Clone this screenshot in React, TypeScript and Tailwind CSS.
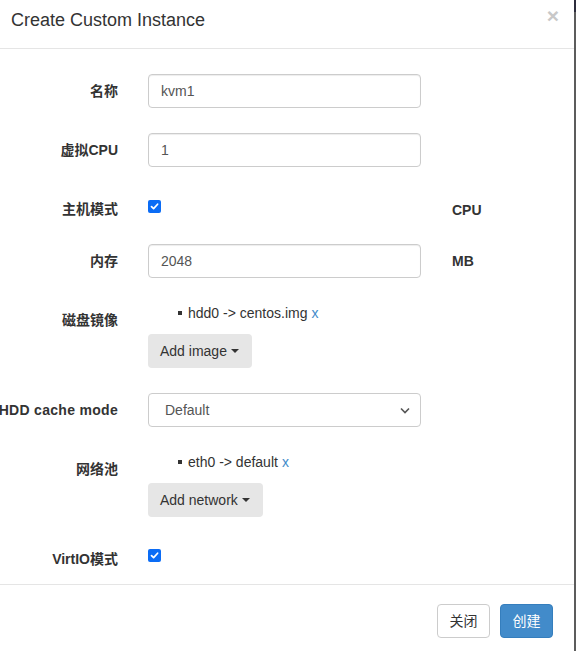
import React from "react";

const font = {
  fontFamily: '"Liberation Sans", Arial, "Noto Sans CJK SC", sans-serif',
};

function Label({ children }: { children: React.ReactNode }) {
  return (
    <div className="w-[118px] shrink-0 whitespace-nowrap flex justify-end pt-[7px] leading-5 text-[14px] font-bold text-[#333]">
      {children}
    </div>
  );
}

function TextInput({ value }: { value: string }) {
  return (
    <div className="w-[273px] h-[34px] border border-[#ccc] rounded-[4px] px-[12px] flex items-center text-[14px] text-[#555] shadow-[inset_0_1px_1px_rgba(0,0,0,0.075)]">
      {value}
    </div>
  );
}

function Check() {
  return (
    <div className="w-[13px] h-[13px] rounded-[2px] bg-[#0b6cf5] flex items-center justify-center">
      <svg width="9" height="9" viewBox="0 0 9 9">
        <path d="M1.5 4.6 L3.6 6.6 L7.6 2.2" fill="none" stroke="#fff" strokeWidth="1.7" strokeLinecap="round" strokeLinejoin="round" />
      </svg>
    </div>
  );
}

function Caret() {
  return <span className="inline-block ml-[4px] w-0 h-0 border-l-[4px] border-r-[4px] border-t-[4px] border-l-transparent border-r-transparent border-t-[#333] align-middle" />;
}

function DropButton({ text, width }: { text: string; width: string }) {
  return (
    <div className={`${width} h-[34px] rounded-[4px] bg-[#e6e6e6] pl-[12px] flex items-center text-[14px] text-[#333]`}>
      {text}
      <Caret />
    </div>
  );
}

function ListItem({ text }: { text: string }) {
  return (
    <div className="h-5 flex items-center text-[14px] text-[#333] leading-5">
      <span className="w-[4px] h-[4px] bg-[#333] ml-[30px] mr-[6px]" />
      <span>{text}</span>
      <span className="ml-[4px] text-[#428bca]">x</span>
    </div>
  );
}

export default function App() {
  return (
    <div style={font} className="w-[576px] h-[651px] flex bg-white overflow-hidden">
      <div className="w-[574px] h-full flex flex-col bg-white">
        {/* header */}
        <div className="h-[49px] shrink-0 border-b border-[#e5e5e5] flex items-start justify-between pl-[11px] pr-[15px] pt-[8px]">
          <div className="text-[18px] leading-6 text-[#333]">Create Custom Instance</div>
          <div className="text-[21px] leading-[18px] font-bold text-[#c8c8c8] -mt-[1px]">×</div>
        </div>

        {/* body */}
        <div className="flex flex-col pt-[25px] h-[536px] shrink-0 border-b border-[#e5e5e5]">
          <div className="flex gap-[30px] h-[34px] mb-[25px]">
            <Label>名称</Label>
            <TextInput value="kvm1" />
          </div>
          <div className="flex gap-[30px] h-[34px] mb-[25px]">
            <Label>虚拟CPU</Label>
            <TextInput value="1" />
          </div>
          <div className="flex gap-[30px] h-[27px] mb-[25px]">
            <Label>主机模式</Label>
            <div className="w-[273px] pt-[8px]">
              <Check />
            </div>
            <div className="pl-[1px] pt-[8px] leading-5 text-[14px] font-bold text-[#333]">CPU</div>
          </div>
          <div className="flex gap-[30px] h-[34px] mb-[25px]">
            <Label>内存</Label>
            <TextInput value="2048" />
            <div className="pl-[1px] pt-[7px] leading-5 text-[14px] font-bold text-[#333]">MB</div>
          </div>
          <div className="flex gap-[30px] mb-[25px]">
            <Label>磁盘镜像</Label>
            <div className="flex flex-col">
              <ListItem text="hdd0 -> centos.img" />
              <div className="h-[11px]" />
              <DropButton text="Add image" width="w-[104px]" />
            </div>
          </div>
          <div className="flex gap-[30px] h-[34px] mb-[25px]">
            <Label>
              <span className="tracking-[0.3px]">HDD cache mode</span>
            </Label>
            <div className="w-[273px] h-[34px] border border-[#ccc] rounded-[4px] pl-[16px] pr-[10px] flex items-center justify-between text-[14px] text-[#555]">
              <span>Default</span>
              <svg width="10" height="7" viewBox="0 0 10 7">
                <path d="M1 1.5 L5 5.5 L9 1.5" fill="none" stroke="#555" strokeWidth="1.6" />
              </svg>
            </div>
          </div>
          <div className="flex gap-[30px] mb-[25px]">
            <Label>网络池</Label>
            <div className="flex flex-col">
              <ListItem text="eth0 -> default" />
              <div className="h-[11px]" />
              <DropButton text="Add network" width="w-[115px]" />
            </div>
          </div>
          <div className="flex gap-[30px] h-[27px]">
            <Label>VirtIO模式</Label>
            <div className="w-[273px] pt-[7px]">
              <Check />
            </div>
          </div>
        </div>

        {/* footer */}
        <div className="flex justify-end gap-[10px] pt-[19px] pr-[21px]">
          <div className="w-[53px] h-[34px] border border-[#ccc] rounded-[4px] bg-white flex items-center justify-center text-[14px] text-[#333]">
            关闭
          </div>
          <div className="w-[53px] h-[34px] border border-[#357ebd] rounded-[4px] bg-[#428bca] flex items-center justify-center text-[14px] text-white">
            创建
          </div>
        </div>
      </div>
      <div className="w-[2px] h-full flex flex-col">
        <div className="h-[12px] bg-[#2c2c3c]" />
        <div className="flex-1 bg-[#5c5c5c]" />
      </div>
    </div>
  );
}
